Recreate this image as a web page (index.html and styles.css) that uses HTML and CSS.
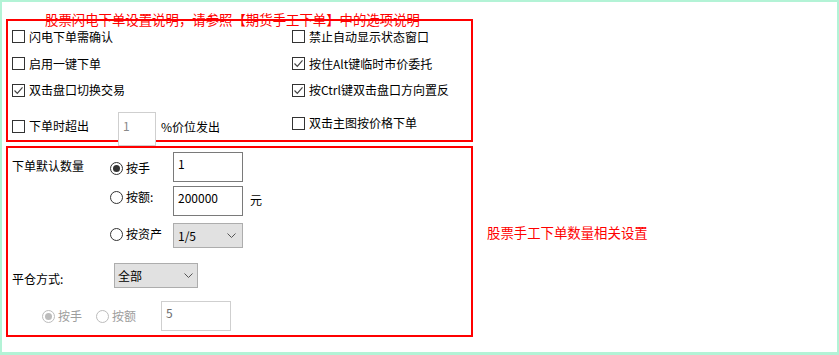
FILE: index.html
```html
<!DOCTYPE html>
<html lang="zh-CN">
<head>
    <meta charset="UTF-8">
    <title>闪电下单设置</title>
    <link rel="stylesheet" href="styles.css">
</head>
<body>
    <div class="page">
        <div class="group flash">
            <span class="legend">股票闪电下单设置说明，请参照【期货手工下单】中的选项说明</span>

            <label class="opt"><span class="cb"></span>闪电下单需确认</label>
            <label class="opt"><span class="cb"></span>禁止自动显示状态窗口</label>

            <label class="opt"><span class="cb"></span>启用一键下单</label>
            <label class="opt"><span class="cb checked"><svg width="11" height="11" viewBox="0 0 11 11"><path d="M1.5 5.5l2.8 2.8 5.2-6" fill="none" stroke="#444" stroke-width="1.2"/></svg></span>按住Alt键临时市价委托</label>

            <label class="opt"><span class="cb checked"><svg width="11" height="11" viewBox="0 0 11 11"><path d="M1.5 5.5l2.8 2.8 5.2-6" fill="none" stroke="#444" stroke-width="1.2"/></svg></span>双击盘口切换交易</label>
            <label class="opt"><span class="cb checked"><svg width="11" height="11" viewBox="0 0 11 11"><path d="M1.5 5.5l2.8 2.8 5.2-6" fill="none" stroke="#444" stroke-width="1.2"/></svg></span>按Ctrl键双击盘口方向置反</label>

            <div class="over">
                <label class="opt"><span class="cb"></span>下单时超出</label>
                <div class="tb pct">1</div>
                <span class="pct-text">%价位发出</span>
            </div>
            <label class="opt late"><span class="cb"></span>双击主图按价格下单</label>
        </div>

        <div class="row">
            <div class="group manual">
                <div class="qty">
                    <span class="qty-title">下单默认数量</span>
                    <label class="rd first"><span class="radio on"></span>按手</label>
                    <div class="tb strong">1</div>
                    <span></span>

                    <span></span>
                    <label class="rd"><span class="radio"></span>按额:</label>
                    <div class="tb strong">200000</div>
                    <span class="unit">元</span>

                    <span></span>
                    <label class="rd"><span class="radio"></span>按资产</label>
                    <div class="combo">1/5<svg width="9" height="5" viewBox="0 0 9 5"><path d="M.5.5l4 4 4-4" fill="none" stroke="#555"/></svg></div>
                    <span></span>
                </div>

                <div class="close-row">
                    <span class="close-title">平仓方式:</span>
                    <div class="combo wide">全部<svg width="9" height="5" viewBox="0 0 9 5"><path d="M.5.5l4 4 4-4" fill="none" stroke="#555"/></svg></div>
                </div>

                <div class="disabled-row">
                    <label class="rd off"><span class="radio on"></span>按手</label>
                    <label class="rd off"><span class="radio"></span>按额</label>
                    <div class="tb faint">5</div>
                </div>
            </div>
            <p class="note">股票手工下单数量相关设置</p>
        </div>
    </div>
</body>
</html>
```

FILE: styles.css
```css
body {
    margin: 0;
    font-family: "Noto Sans CJK SC", "Microsoft YaHei", sans-serif;
    font-size: 12px;
    color: #000;
    background: #fff;
}

.page {
    box-sizing: border-box;
    width: 839px;
    height: 355px;
    border: 2px solid #b3f3d6;
    border-bottom-width: 3px;
    padding: 17px 0 0 4px;
    background: #fff;
}

.group {
    box-sizing: border-box;
    width: 467px;
    border: 2px solid #ff0000;
    position: relative;
}

/* upper box */
.flash {
    display: grid;
    grid-template-columns: 280px 1fr;
    grid-template-rows: 27px 27px 26px 37px;
    padding: 2px 0 0 4px;
}

.legend {
    position: absolute;
    left: 37px;
    top: -10px;
    line-height: 16px;
    font-size: 13.4px;
    color: #ff0000;
    white-space: nowrap;
}

.opt {
    display: flex;
    align-items: center;
    gap: 4px;
    line-height: 16px;
}

.cb {
    box-sizing: border-box;
    width: 13px;
    height: 13px;
    border: 1px solid #333;
    background: #fff;
    display: flex;
    align-items: center;
    justify-content: center;
    flex: none;
}

.over {
    display: flex;
    align-items: flex-start;
}

.over .opt {
    margin-top: 15px;
}

.tb {
    box-sizing: border-box;
    width: 70px;
    height: 30px;
    border: 1px solid #7a7a7a;
    background: #fff;
    padding: 3px 4px;
    line-height: 16px;
}

.tb.pct {
    width: 38px;
    height: 34px;
    margin: 9px 0 0 29px;
    border-color: #cfcfcf;
    color: #8a8a8a;
    padding-top: 5px;
    position: relative;
    z-index: 1;
}

.pct-text {
    margin: 16px 0 0 5px;
    line-height: 16px;
}

.opt.late {
    align-self: start;
    margin-top: 12px;
}

/* lower box */
.row {
    display: flex;
    margin-top: 4px;
}

.manual {
    padding: 4px 0 4px 4px;
}

.qty {
    display: grid;
    grid-template-columns: 98px 63px 70px auto;
    grid-template-rows: 34px 37px 25px;
    align-items: start;
}

.qty-title {
    margin-top: 6px;
    line-height: 16px;
}

.rd {
    display: flex;
    align-items: center;
    gap: 3px;
    line-height: 16px;
    margin-top: 3px;
}

.rd.first {
    margin-top: 8px;
}

.radio {
    box-sizing: border-box;
    width: 13px;
    height: 13px;
    border: 1px solid #333;
    border-radius: 50%;
    background: #fff;
    display: flex;
    align-items: center;
    justify-content: center;
    flex: none;
}

.radio.on::after {
    content: "";
    width: 7px;
    height: 7px;
    border-radius: 50%;
    background: #333;
}

.unit {
    margin: 6px 0 0 7px;
    line-height: 16px;
}

.combo {
    box-sizing: border-box;
    width: 70px;
    height: 25px;
    border: 1px solid #adadad;
    background: #e1e1e1;
    display: flex;
    align-items: center;
    justify-content: space-between;
    padding: 0 6px 0 4px;
}

.combo.wide {
    width: 84px;
    padding-left: 3px;
    padding-right: 4px;
}

.close-row {
    display: flex;
    align-items: flex-start;
    margin-top: 15px;
}

.close-title {
    width: 102px;
    margin-top: 8px;
    line-height: 16px;
}

.disabled-row {
    display: flex;
    align-items: center;
    margin-top: 13px;
    padding-left: 30px;
}

.rd.off {
    margin-top: 0;
    color: #9d9d9d;
    margin-right: 14px;
}

.rd.off + .rd.off {
    margin-right: 25px;
}

.rd.off .radio {
    border-color: #bcbcbc;
}

.rd.off .radio.on::after {
    background: #bcbcbc;
}

.tb.faint {
    border-color: #cfcfcf;
    color: #6d6d6d;
}

.note {
    margin: 78px 0 0 14px;
    line-height: 16px;
    font-size: 13.4px;
    color: #ff0000;
}
```
